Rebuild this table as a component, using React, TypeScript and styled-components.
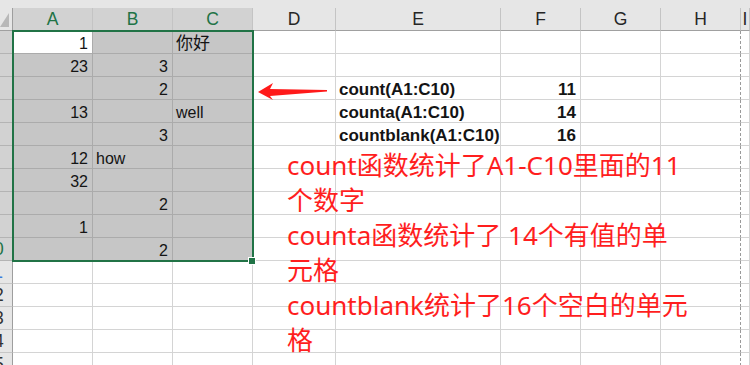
import React from 'react';
import styled, { createGlobalStyle } from 'styled-components';

const GlobalStyle = createGlobalStyle`
  html, body { margin: 0; padding: 0; background: #ffffff; }
  body { overflow: hidden; }
`;

const COLS = [13, 80, 80, 80, 83, 165, 80, 80, 80, 9];
const LETTERS = ['', 'A', 'B', 'C', 'D', 'E', 'F', 'G', 'H', 'I'];
const TEMPLATE = COLS.map((w) => `${w}px`).join(' ');
const GREEN = '#217346';

type CellData = { v: string; num?: boolean; bold?: boolean; cjk?: boolean };
type RowData = { [col: number]: CellData };

const ROWS: RowData[] = [
  { 1: { v: '1', num: true }, 3: { v: '你好', cjk: true } },
  { 1: { v: '23', num: true }, 2: { v: '3', num: true } },
  { 2: { v: '2', num: true }, 5: { v: 'count(A1:C10)', bold: true }, 6: { v: '11', num: true, bold: true } },
  { 1: { v: '13', num: true }, 3: { v: 'well' }, 5: { v: 'counta(A1:C10)', bold: true }, 6: { v: '14', num: true, bold: true } },
  { 2: { v: '3', num: true }, 5: { v: 'countblank(A1:C10)', bold: true }, 6: { v: '16', num: true, bold: true } },
  { 1: { v: '12', num: true }, 2: { v: 'how' } },
  { 1: { v: '32', num: true } },
  { 2: { v: '2', num: true } },
  { 1: { v: '1', num: true } },
  { 2: { v: '2', num: true } },
  {}, {}, {}, {}, {},
];

const NOTE_LINES = [
  'count函数统计了A1-C10里面的11',
  '个数字',
  'counta函数统计了 14个有值的单',
  '元格',
  'countblank统计了16个空白的单元',
  '格',
];

const Sheet = styled.div`
  position: relative;
  width: 750px;
  height: 365px;
  overflow: hidden;
  background: #ffffff;
  font-family: "Liberation Sans", "Noto Sans CJK SC", sans-serif;
`;

const TopStrip = styled.div`
  height: 8px;
  background: #e6e6e6;
`;

const GridRow = styled.div`
  display: grid;
  grid-template-columns: ${TEMPLATE};
  height: 23px;
`;

const Corner = styled.div`
  box-sizing: border-box;
  background: #e6e6e6;
  border-right: 1px solid #9e9e9e;
  border-bottom: 1px solid #a0a0a0;
  display: flex;
  align-items: flex-end;
  padding-bottom: 3px;
`;

const ColHeader = styled.div<{ $sel?: boolean }>`
  box-sizing: border-box;
  background: ${(p) => (p.$sel ? '#d2d2d2' : '#e6e6e6')};
  border-right: 1px solid #c4c4c4;
  border-bottom: 1px solid #a0a0a0;
  color: ${(p) => (p.$sel ? GREEN : '#262626')};
  font-size: 17.5px;
  line-height: 23px;
  text-align: center;
  overflow: hidden;
`;

const RowHead = styled.div<{ $sel?: boolean }>`
  box-sizing: border-box;
  background: ${(p) => (p.$sel ? '#d2d2d2' : '#e6e6e6')};
  border-right: 1px solid #9e9e9e;
  border-bottom: 1px solid ${(p) => (p.$sel ? '#b4b4b4' : '#c6c6c6')};
  overflow: hidden;
`;

const RowNum = styled.span<{ $color: string }>`
  display: block;
  width: 40px;
  margin-left: -26px;
  text-align: center;
  font-size: 17.5px;
  line-height: 23px;
  color: ${(p) => p.$color};
`;

const Cell = styled.div<{
  $sel?: boolean;
  $active?: boolean;
  $right?: boolean;
  $bold?: boolean;
  $cjk?: boolean;
  $dashed?: boolean;
}>`
  box-sizing: border-box;
  display: flex;
  align-items: flex-end;
  justify-content: ${(p) => (p.$right ? 'flex-end' : 'flex-start')};
  padding: 0 4px 1px 3px;
  background: ${(p) => (p.$active ? '#ffffff' : p.$sel ? '#c6c6c6' : '#ffffff')};
  border-right: 1px ${(p) => (p.$dashed ? 'dashed #9a9a9a' : `solid ${p.$sel ? '#ababab' : '#d4d4d4'}`)};
  border-bottom: 1px solid ${(p) => (p.$sel ? '#ababab' : '#d4d4d4')};
  font-size: ${(p) => (p.$cjk ? '17px' : p.$bold ? '17px' : '16px')};
  font-weight: ${(p) => (p.$bold ? 700 : 400)};
  line-height: 16px;
  white-space: nowrap;
  color: #141414;
  overflow: visible;
`;

const Selection = styled.div`
  position: absolute;
  left: 12px;
  top: 30px;
  width: 242px;
  height: 232px;
  box-sizing: border-box;
  border: 2px solid ${GREEN};
  pointer-events: none;
`;

const Handle = styled.div`
  position: absolute;
  left: 248px;
  top: 257px;
  width: 8px;
  height: 8px;
  box-sizing: border-box;
  background: ${GREEN};
  border: 1px solid #ffffff;
`;

const Arrow = styled.svg`
  position: absolute;
  left: 256px;
  top: 82px;
  width: 74px;
  height: 20px;
`;

const Note = styled.div`
  position: absolute;
  left: 287px;
  top: 148px;
  color: #ff1e1e;
  font-family: "Noto Sans", "Noto Sans CJK SC", sans-serif;
  font-size: 26px;
  line-height: 35px;
`;

const NoteLine = styled.div`
  white-space: nowrap;
`;

function rowNumColor(r: number): string {
  if (r === 10) return GREEN;
  if (r === 11) return '#3b7ddd';
  return '#333333';
}

export default function App() {
  return (
    <>
      <GlobalStyle />
      <Sheet>
        <TopStrip />
        <GridRow>
          {LETTERS.map((l, i) =>
            i === 0 ? (
              <Corner key={i}>
                <svg width="9" height="15" viewBox="0 0 9 15">
                  <polygon points="0,15 9,15 9,1" fill="#b8b8b8" />
                </svg>
              </Corner>
            ) : (
              <ColHeader key={i} $sel={i >= 1 && i <= 3}>
                {l}
              </ColHeader>
            )
          )}
        </GridRow>
        {ROWS.map((row, r) => {
          const rowNo = r + 1;
          const inSel = rowNo <= 10;
          return (
            <GridRow key={r}>
              <RowHead $sel={inSel}>
                <RowNum $color={rowNumColor(rowNo)}>{rowNo}</RowNum>
              </RowHead>
              {COLS.slice(1).map((_, ci) => {
                const c = ci + 1;
                const d = row[c];
                const sel = inSel && c <= 3;
                return (
                  <Cell
                    key={c}
                    $sel={sel}
                    $active={rowNo === 1 && c === 1}
                    $right={!!d?.num}
                    $bold={!!d?.bold}
                    $cjk={!!d?.cjk}
                    $dashed={c === 8}
                  >
                    {d?.v}
                  </Cell>
                );
              })}
            </GridRow>
          );
        })}
        <Selection />
        <Handle />
        <Arrow viewBox="0 0 74 20">
          <polygon points="2,10 17,1 14,7 71,8 71,9.6 14,14 17,18" fill="#ff1a1a" />
        </Arrow>
        <Note>
          {NOTE_LINES.map((t, i) => (
            <NoteLine key={i}>{t}</NoteLine>
          ))}
        </Note>
      </Sheet>
    </>
  );
}
